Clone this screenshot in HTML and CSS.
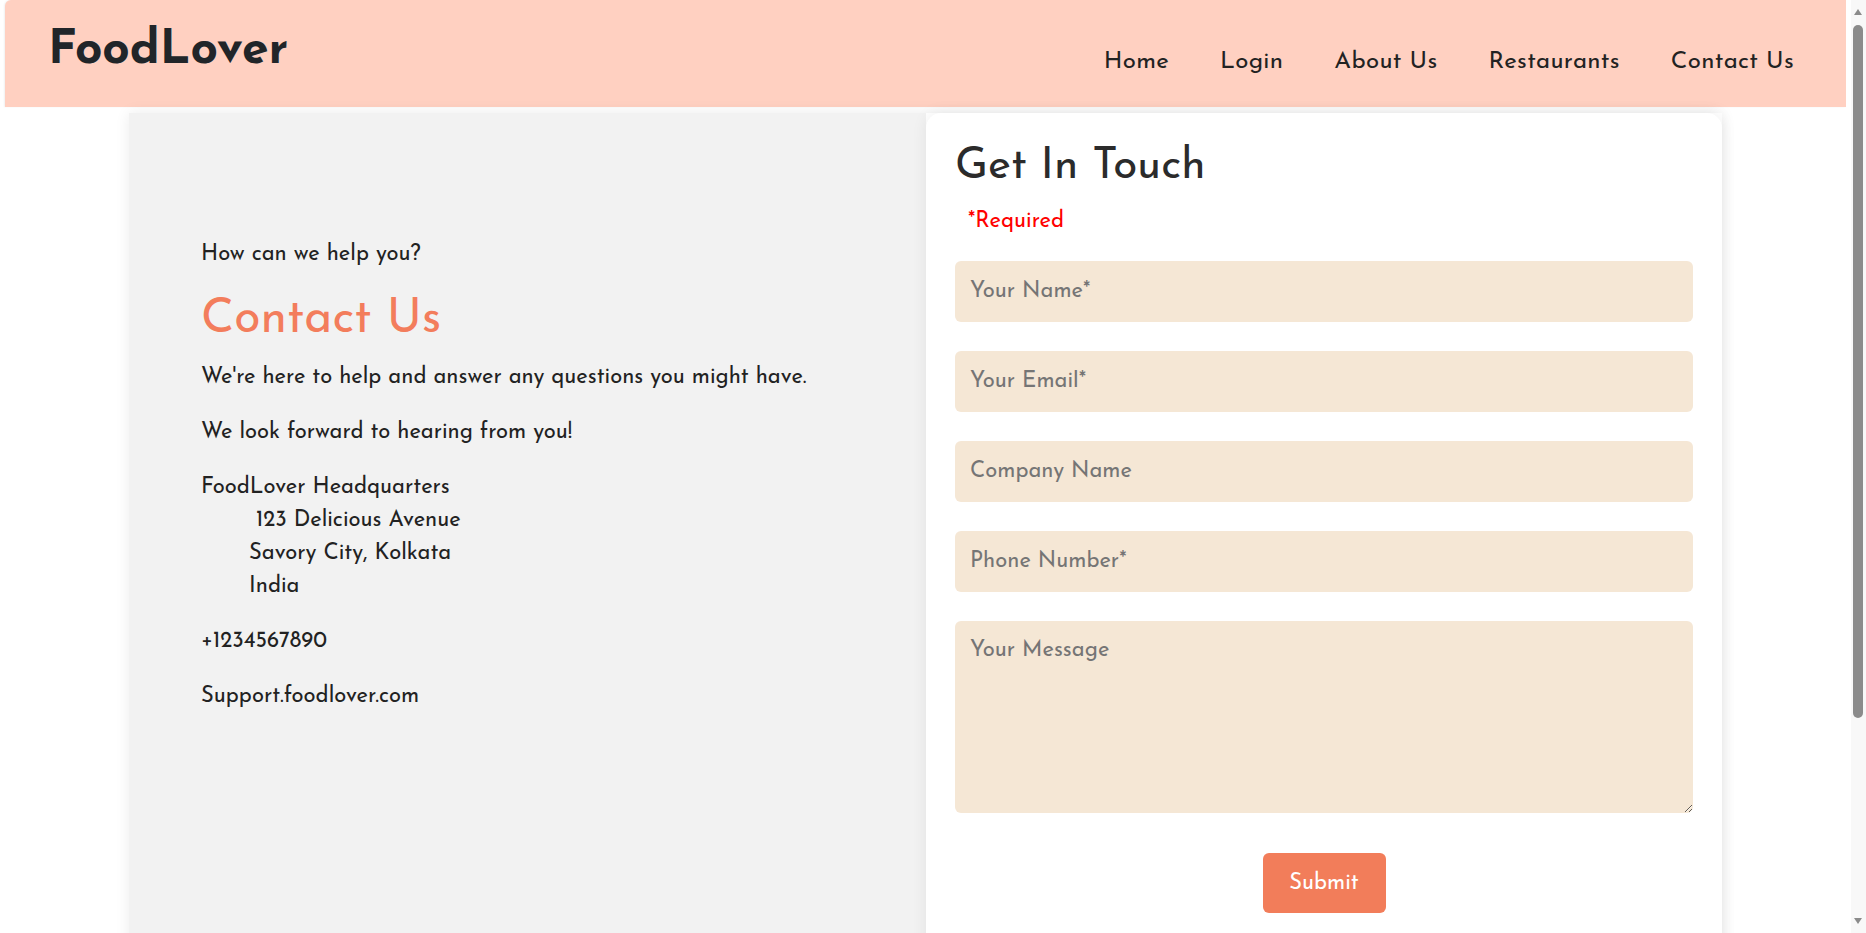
FILE: index.html
```html
<!DOCTYPE html>
<html lang="en">
<head>
<meta charset="utf-8">
<title>FoodLover - Contact Us</title>
<link rel="stylesheet" href="styles.css">
</head>
<body>
<div class="page">
  <header class="site-header">
    <div class="logo">FoodLover</div>
    <nav class="main-nav">
      <a href="#">Home</a>
      <a href="#">Login</a>
      <a href="#">About Us</a>
      <a href="#">Restaurants</a>
      <a href="#">Contact Us</a>
    </nav>
  </header>

  <main class="contact">
    <section class="info">
      <p class="lead">How can we help you?</p>
      <h1 class="info-title">Contact Us</h1>
      <p>We're here to help and answer any questions you might have.</p>
      <p>We look forward to hearing from you!</p>
      <p class="address">
        <span class="addr-line">FoodLover Headquarters</span>
        <span class="addr-line addr-first">123 Delicious Avenue</span>
        <span class="addr-line addr-indent">Savory City, Kolkata</span>
        <span class="addr-line addr-indent">India</span>
      </p>
      <p>+1234567890</p>
      <p>Support.foodlover.com</p>
    </section>

    <section class="form-card">
      <h2 class="form-title">Get In Touch</h2>
      <p class="required">*Required</p>
      <form class="contact-form">
        <input class="field" type="text" placeholder="Your Name*">
        <input class="field" type="email" placeholder="Your Email*">
        <input class="field" type="text" placeholder="Company Name">
        <input class="field" type="tel" placeholder="Phone Number*">
        <textarea class="field message" placeholder="Your Message"></textarea>
        <div class="actions">
          <button class="submit" type="button">Submit</button>
        </div>
      </form>
    </section>
  </main>
</div>

<div class="scrollbar" aria-hidden="true">
  <span class="sb-arrow sb-up"></span>
  <span class="sb-thumb"></span>
  <span class="sb-arrow sb-down"></span>
</div>
</body>
</html>
```

FILE: styles.css
```css
* {
  box-sizing: border-box;
}

html, body {
  margin: 0;
  padding: 0;
}

body {
  font-family: "Josefin Sans", Lato, "Open Sans", sans-serif;
  color: #222;
  background: #fff;
}

.page {
  margin-right: 15px;
  padding-bottom: 270px;
}

/* Header */
.site-header {
  margin: 0 5px;
  height: 107px;
  background: #ffd0c1;
  border-top-left-radius: 6px;
  box-shadow: -1px 0 2px rgba(0, 0, 0, 0.06);
  display: flex;
  justify-content: space-between;
  align-items: flex-start;
}

.logo {
  font-size: 48px;
  font-weight: 700;
  color: #212529;
  padding-left: 43px;
  padding-top: 23px;
  line-height: 1.2;
}

.main-nav {
  display: flex;
  gap: 51px;
  padding-right: 52px;
  padding-top: 48px;
}

.main-nav a {
  color: #222;
  text-decoration: none;
  font-size: 24px;
  line-height: 1.2;
  letter-spacing: 0.3px;
}

/* Main layout */
.contact {
  width: 1593px;
  margin: 6px auto 0;
  display: grid;
  grid-template-columns: 797px 796px;
  box-shadow: 0 0 14px rgba(0, 0, 0, 0.08);
  min-height: 850px;
}

.info {
  background: #f2f2f2;
  padding: 125px 40px 40px 72px;
}

.info p {
  font-size: 22px;
  font-weight: 400;
  line-height: 33px;
  margin: 0 0 22px;
  color: #222;
}

.info .lead {
  margin-bottom: 21px;
}

.info-title {
  font-size: 48px;
  font-weight: 400;
  color: #f37d5c;
  margin: 0 0 11px;
  line-height: 1.2;
}

.address .addr-line {
  display: block;
}

.address .addr-first {
  padding-left: 55px;
}

.address .addr-indent {
  padding-left: 48px;
}

/* Form card */
.form-card {
  background: #fff;
  border-radius: 15px;
  box-shadow: 0 0 16px rgba(0, 0, 0, 0.07);
  padding: 28px 29px 40px;
}

.form-title {
  font-size: 44px;
  font-weight: 400;
  color: #2b2b2b;
  margin: 0;
  line-height: 1.2;
}

.required {
  color: #ff0000;
  font-size: 22px;
  line-height: 1.2;
  margin: 15px 0 26px 13px;
}

.contact-form {
  display: flex;
  flex-direction: column;
  gap: 29px;
}

.field {
  display: block;
  width: 100%;
  height: 61px;
  border: none;
  border-radius: 6px;
  background: #f5e7d5;
  font-family: inherit;
  font-size: 22px;
  color: #333;
  padding: 0 15px;
  outline: none;
}

.field::placeholder {
  color: #757575;
}

.message {
  height: 192px;
  padding-top: 17px;
  line-height: 1.2;
  resize: vertical;
}

.actions {
  display: flex;
  justify-content: center;
  padding-top: 11px;
}

.submit {
  width: 123px;
  height: 60px;
  border: none;
  border-radius: 6px;
  background: #f27d5a;
  color: #fff;
  font-family: inherit;
  font-size: 22px;
  cursor: pointer;
}

/* Browser scrollbar imitation */
.scrollbar {
  position: fixed;
  top: 0;
  right: 0;
  width: 15px;
  height: 100%;
  background: #f8f8f8;
}

.sb-thumb {
  position: absolute;
  left: 2px;
  top: 25px;
  width: 10px;
  height: 693px;
  border-radius: 5px;
  background: #8b8b8b;
}

.sb-arrow {
  position: absolute;
  left: 3px;
  width: 0;
  height: 0;
  border-left: 4.5px solid transparent;
  border-right: 4.5px solid transparent;
}

.sb-up {
  top: 9px;
  border-bottom: 6px solid #8b8b8b;
}

.sb-down {
  bottom: 9px;
  border-top: 6px solid #8b8b8b;
}
```
